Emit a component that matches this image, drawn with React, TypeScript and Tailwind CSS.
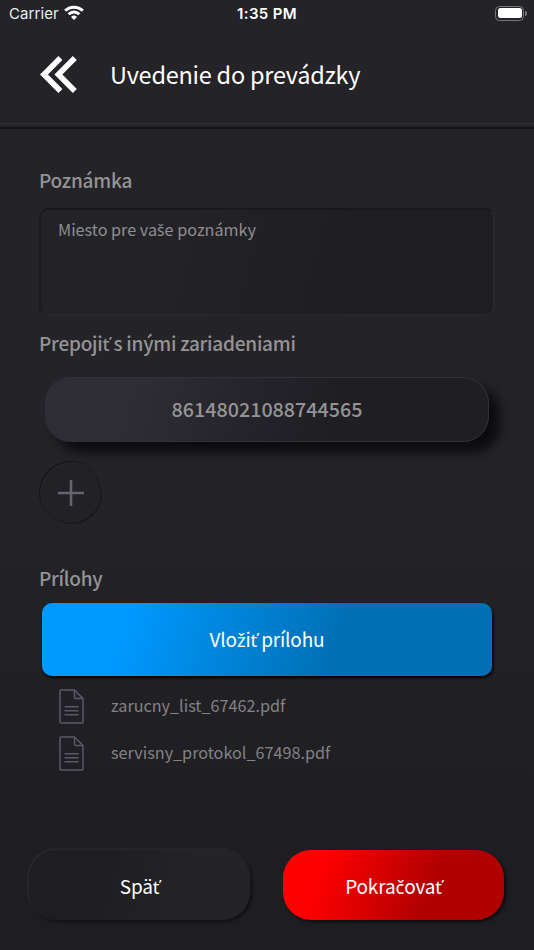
import { clsx } from "clsx";

const attachments = [
  { id: 1, name: "zarucny_list_67462.pdf" },
  { id: 2, name: "servisny_protokol_67498.pdf" },
];

function Label({ text }: { text: string }) {
  return (
    <span>
      {text.split(/([ščžť])/).map((part, i) =>
        i % 2 === 1 ? (
          <span key={i} className="font-['Noto_Sans',sans-serif] text-[0.97em] leading-none">{part}</span>
        ) : (
          part
        )
      )}
    </span>
  );
}

function StatusBar() {
  return (
    <div className="grid h-7 grid-cols-3 items-center pl-[9px] pr-[7px] font-['Inter',sans-serif] text-[15px] leading-7 text-white">
      <div className="flex items-center gap-[5px]">
        <span className="tracking-[0.1px] text-[#ededee]">Carrier</span>
        <svg className="-mt-[3px]" width="20" height="15" viewBox="0 0 20 15" fill="none" stroke="white" strokeWidth="3">
          <path d="M1.2 5.8a12.4 12.4 0 0 1 17.6 0" />
          <path d="M4.7 9.3a7.5 7.5 0 0 1 10.6 0" />
          <path d="M10 15 7 12a4.3 4.3 0 0 1 6 0z" fill="white" stroke="none" />
        </svg>
      </div>
      <span className="-ml-[2px] text-center font-semibold tracking-[0.35px]">1:35 PM</span>
      <div className="-mt-[2px] flex items-center justify-end gap-[1px]">
        <div className="h-[15px] w-[29px] rounded-[4.5px] border border-[#77767a] p-[1.5px]">
          <div className="h-full rounded-[2.5px] bg-white" />
        </div>
        <div className="h-[5px] w-[2px] rounded-r-full bg-[#77767a]" />
      </div>
    </div>
  );
}

function FileIcon() {
  return (
    <svg width="25" height="35" viewBox="0 0 25 35" fill="none" stroke="#5b5965" strokeWidth="1.5" strokeLinejoin="round">
      <path d="M2 1h13.5L24 9.6V33a1 1 0 0 1-1 1H2a1 1 0 0 1-1-1V2a1 1 0 0 1 1-1z" />
      <path d="M15.5 1v7.6a1 1 0 0 0 1 1H24" />
      <path d="M6 17.8h13M6 21.8h13M6 25.8h13" strokeLinecap="round" />
    </svg>
  );
}

function SectionTitle({ text, className }: { text: string; className?: string }) {
  return (
    <h2 className={clsx("h-7 text-[19px] font-medium leading-7 tracking-[-0.24px] text-[#959495]", className)}>
      <Label text={text} />
    </h2>
  );
}

export default function App() {
  return (
    <div className="flex h-[950px] w-[534px] flex-col overflow-hidden bg-linear-to-b from-[#242328] from-50% to-[#1e1d22] to-90% font-['Noto_Sans_CJK_SC','Noto_Sans',sans-serif]">
      <header>
        <StatusBar />
        <div className="flex h-[95px] items-center pb-[2px] pl-10">
          <button aria-label="Back">
            <svg width="38" height="38" viewBox="0 0 38 38" fill="none" stroke="white" strokeWidth="5.6">
              <path d="M20.4 2 4 18.5 20.4 35" />
              <path d="M34.8 2 18.4 18.5 34.8 35" />
            </svg>
          </button>
          <h1 className="-mt-[2px] ml-8 text-[23.5px] leading-9 tracking-[-0.24px] text-white">Uvedenie do prevádzky</h1>
        </div>
        <div className="h-[2px] bg-[#2d2c31]" />
        <div className="h-[2px] bg-[#232227]" />
        <div className="h-[2px] bg-[#151418]" />
      </header>

      <main className="flex flex-col px-[39px] pt-[37px]">
        <SectionTitle text="Poznámka" />
        <div className="mt-[14px] h-[108px] w-[456px] rounded-[10px] border-2 border-b-[#27262b] border-l-[#1b1a1e] border-r-[#27262b] border-t-[#19181c] bg-linear-105 from-[#232227] from-30% to-[#1e1d22] to-70% px-[17px] pt-[5px] text-[16.2px] leading-7 text-[#8f8e90]">
          <Label text="Miesto pre vaše poznámky" />
        </div>

        <SectionTitle text="Prepojiť s inými zariadeniami" className="mt-[13px]" />
        <div className="ml-[6px] mt-[20px] flex h-[65px] w-[444px] items-center justify-center rounded-[26px] border border-[#323137] bg-linear-105 from-[#2e2c35] from-20% to-[#1f1e23] to-65% pb-[2px] text-[19.7px] font-medium text-[#959495] shadow-[11px_10px_11px_#0c0c0e]">
          86148021088744565
        </div>
        <button
          aria-label="Add device"
          className="mt-[19px] flex size-16 items-center justify-center rounded-full shadow-[inset_1px_1px_1px_#151418,inset_-1px_-1px_1px_#302f35]"
        >
          <span className="flex size-[59px] items-center justify-center rounded-full bg-[#222126] shadow-[1px_1px_1px_#151418,-1px_-1px_1px_#29282d]">
            <svg width="26" height="26" viewBox="0 0 26 26" stroke="#66646f" strokeWidth="2.6">
              <path d="M13 0v26M0 13h26" />
            </svg>
          </span>
        </button>

        <SectionTitle text="Prílohy" className="mt-[39px]" />
        <button className="ml-[3px] mt-[11px] h-[73px] w-[450px] rounded-[10px] bg-linear-108 from-[#0099ff] from-19% to-[#0070b5] to-65% text-[19px] tracking-[-0.15px] text-white shadow-[1px_2px_3px_#000]">
          <Label text="Vložiť prílohu" />
        </button>
        <ul className="mt-[13px] flex flex-col gap-3 pl-5">
          {attachments.map((file) => (
            <li key={file.id} className="flex h-[35px] items-center gap-[27px] text-[16.2px] text-[#838284]">
              <FileIcon />
              <span className="-mt-[2px]">{file.name}</span>
            </li>
          ))}
        </ul>
      </main>

      <footer className="mb-[30px] mt-auto flex gap-[33px] pl-[29px] text-[19px] tracking-[-0.15px] text-white">
        <button className="h-[70px] w-[221px] rounded-[28px] bg-linear-105 from-[#1e1d22] from-30% to-[#242328] to-70% pt-[2px] shadow-[-1px_-1px_3px_#302f35,2px_2px_3px_#111014]">
          <Label text="Späť" />
        </button>
        <button className="h-[70px] w-[221px] rounded-[28px] bg-linear-110 from-[#ff0000] from-18% to-[#b00000] to-67% pt-[2px] shadow-[2px_2px_3px_#0b0b0d]">
          <Label text="Pokračovať" />
        </button>
      </footer>
    </div>
  );
}
